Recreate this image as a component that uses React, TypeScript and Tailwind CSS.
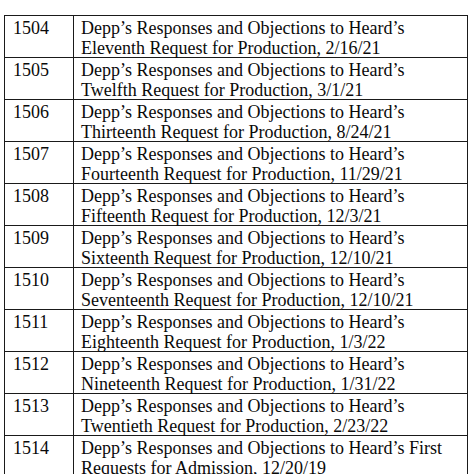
const rows = [
  ['1504', 'Depp’s Responses and Objections to Heard’s', 'Eleventh Request for Production, 2/16/21'],
  ['1505', 'Depp’s Responses and Objections to Heard’s', 'Twelfth Request for Production, 3/1/21'],
  ['1506', 'Depp’s Responses and Objections to Heard’s', 'Thirteenth Request for Production, 8/24/21'],
  ['1507', 'Depp’s Responses and Objections to Heard’s', 'Fourteenth Request for Production, 11/29/21'],
  ['1508', 'Depp’s Responses and Objections to Heard’s', 'Fifteenth Request for Production, 12/3/21'],
  ['1509', 'Depp’s Responses and Objections to Heard’s', 'Sixteenth Request for Production, 12/10/21'],
  ['1510', 'Depp’s Responses and Objections to Heard’s', 'Seventeenth Request for Production, 12/10/21'],
  ['1511', 'Depp’s Responses and Objections to Heard’s', 'Eighteenth Request for Production, 1/3/22'],
  ['1512', 'Depp’s Responses and Objections to Heard’s', 'Nineteenth Request for Production, 1/31/22'],
  ['1513', 'Depp’s Responses and Objections to Heard’s', 'Twentieth Request for Production, 2/23/22'],
  ['1514', 'Depp’s Responses and Objections to Heard’s First', 'Requests for Admission, 12/20/19'],
];

export default function App() {
  return (
    <div
      className="w-[474px] h-[474px] overflow-hidden bg-white pt-[15px] pl-[4px] text-[18px] leading-[20px] text-[#0a0a0a]"
      style={{ fontFamily: '"Liberation Serif", "Times New Roman", serif' }}
    >
      <div className="w-[464px] border-t border-l border-r border-[#1a1a1a]">
        {rows.map(([num, line1, line2]) => (
          <div key={num} className="flex h-[42px] border-b border-[#1a1a1a]">
            <div className="w-[69px] shrink-0 border-r border-[#1a1a1a] pl-[8px] pt-[2px]">{num}</div>
            <div className="flex-1 pl-[7px] pt-[2px] whitespace-nowrap">
              <div>{line1}</div>
              <div>{line2}</div>
            </div>
          </div>
        ))}
      </div>
    </div>
  );
}
